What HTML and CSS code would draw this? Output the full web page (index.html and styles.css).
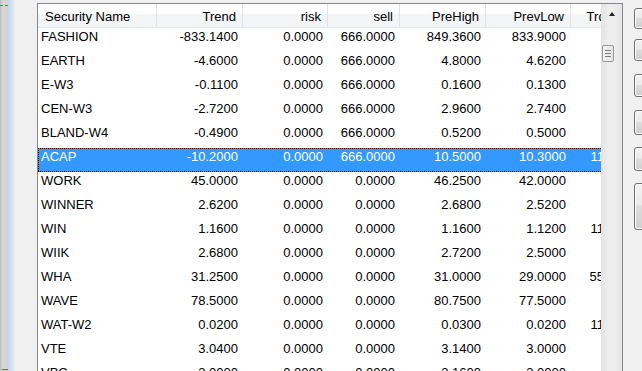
FILE: index.html
```html
<!DOCTYPE html>
<html lang="en">
<head>
    <meta charset="UTF-8">
    <title>Securities</title>
    <link rel="stylesheet" href="styles.css">
</head>
<body>
    <div class="window">
        <div class="side">
            <div class="side-edge"><span class="mark-green"></span><span class="mark-red"></span></div>
            <div class="side-bar"></div>
            <div class="side-fill"></div>
        </div>

        <div class="list">
            <div class="grid">
                <div class="head">
                    <span>Security Name</span><span>Trend</span><span>risk</span><span>sell</span><span>PreHigh</span><span>PrevLow</span><span>TrdVolume</span>
                </div>
                <div class="row"><span>FASHION</span><span>-833.1400</span><span>0.0000</span><span>666.0000</span><span>849.3600</span><span>833.9000</span><span></span></div>
                <div class="row"><span>EARTH</span><span>-4.6000</span><span>0.0000</span><span>666.0000</span><span>4.8000</span><span>4.6200</span><span></span></div>
                <div class="row"><span>E-W3</span><span>-0.1100</span><span>0.0000</span><span>666.0000</span><span>0.1600</span><span>0.1300</span><span></span></div>
                <div class="row"><span>CEN-W3</span><span>-2.7200</span><span>0.0000</span><span>666.0000</span><span>2.9600</span><span>2.7400</span><span></span></div>
                <div class="row"><span>BLAND-W4</span><span>-0.4900</span><span>0.0000</span><span>666.0000</span><span>0.5200</span><span>0.5000</span><span></span></div>
                <div class="row selected"><span>ACAP</span><span>-10.2000</span><span>0.0000</span><span>666.0000</span><span>10.5000</span><span>10.3000</span><span>1100.0000</span></div>
                <div class="row"><span>WORK</span><span>45.0000</span><span>0.0000</span><span>0.0000</span><span>46.2500</span><span>42.0000</span><span></span></div>
                <div class="row"><span>WINNER</span><span>2.6200</span><span>0.0000</span><span>0.0000</span><span>2.6800</span><span>2.5200</span><span></span></div>
                <div class="row"><span>WIN</span><span>1.1600</span><span>0.0000</span><span>0.0000</span><span>1.1600</span><span>1.1200</span><span>1100.0000</span></div>
                <div class="row"><span>WIIK</span><span>2.6800</span><span>0.0000</span><span>0.0000</span><span>2.7200</span><span>2.5000</span><span></span></div>
                <div class="row"><span>WHA</span><span>31.2500</span><span>0.0000</span><span>0.0000</span><span>31.0000</span><span>29.0000</span><span>5500.0000</span></div>
                <div class="row"><span>WAVE</span><span>78.5000</span><span>0.0000</span><span>0.0000</span><span>80.7500</span><span>77.5000</span><span></span></div>
                <div class="row"><span>WAT-W2</span><span>0.0200</span><span>0.0000</span><span>0.0000</span><span>0.0300</span><span>0.0200</span><span>1100.0000</span></div>
                <div class="row"><span>VTE</span><span>3.0400</span><span>0.0000</span><span>0.0000</span><span>3.1400</span><span>3.0000</span><span></span></div>
                <div class="row"><span>VBC</span><span>3.0000</span><span>0.0000</span><span>0.0000</span><span>3.1600</span><span>3.0000</span><span></span></div>
            </div>
            <div class="vscroll">
                <div class="sb-up"><span class="arrow"></span></div>
                <div class="sb-thumb"><i></i><i></i><i></i></div>
            </div>
        </div>

        <div class="buttons">
            <button class="b1"></button>
            <button class="b2"></button>
            <button class="b3"></button>
            <button class="b4"></button>
            <button class="b5"></button>
            <button class="b6"></button>
        </div>
    </div>
</body>
</html>
```

FILE: styles.css
```css
body {
    margin: 0;
    background: #f0f0f0;
    font-family: "Liberation Sans", Arial, sans-serif;
    font-size: 13px;
    line-height: 15px;
    color: #000;
    overflow: hidden;
}
.window {
    display: flex;
    height: 371px;
}

/* left edge of the neighbouring pane */
.side {
    display: flex;
    width: 37px;
    flex: none;
}
.side-edge {
    position: relative;
    width: 8px;
    background: linear-gradient(90deg, #b9b9b9, #d6d6d6 30%, #d2d2d2);
}
.mark-green {
    position: absolute;
    left: 0;
    top: 5px;
    width: 8px;
    border-top: 1px dashed #3c9a3c;
}
.mark-red {
    position: absolute;
    left: 2px;
    bottom: 1px;
    width: 6px;
    border-top: 1px dashed #d04040;
}
.side-bar {
    width: 6px;
    background: linear-gradient(90deg, #c4d8ee, #dce8f6);
}
.side-fill {
    flex: 1;
    background: #f0f0f0;
}

/* list view */
.list {
    display: flex;
    width: 584px;
    flex: none;
    margin-top: 3px;
    border: 1px solid #828790;
    border-bottom: none;
    background: #fff;
    overflow: hidden;
}
.grid {
    flex: 1;
    overflow: hidden;
}
.head, .row {
    display: grid;
    grid-template-columns: 119px 86px 85px 72px 86px 85px 85px;
    width: 618px;
    height: 24px;
    box-sizing: border-box;
}
.head {
    background: linear-gradient(#fff 45%, #f4f5f7 45%);
    border-bottom: 1px solid #e6e7e9;
}
.head span {
    padding: 5px 6px 0;
    text-align: right;
    border-right: 1px solid #e1e3e7;
    white-space: nowrap;
}
.head span:first-child {
    text-align: left;
    padding-left: 7px;
}
.row span {
    padding: 1px 5px 0;
    text-align: right;
    white-space: nowrap;
}
.row span:first-child {
    text-align: left;
    padding-left: 3px;
}
.row.selected {
    color: #fff;
    background:
        repeating-linear-gradient(90deg, #000 0 1px, #c60 1px 2px) top / 100% 1px no-repeat,
        repeating-linear-gradient(90deg, #000 0 1px, #c60 1px 2px) bottom / 100% 1px no-repeat,
        repeating-linear-gradient(#000 0 1px, #c60 1px 2px) left / 1px 100% no-repeat,
        #3399ff;
}

/* vertical scrollbar */
.vscroll {
    width: 21px;
    flex: none;
    background: linear-gradient(90deg, #e3e3e3, #efefef 40%, #ececec 70%, #e3e3e3);
}
.sb-up {
    height: 17px;
    display: flex;
    justify-content: center;
    padding-top: 8px;
    box-sizing: border-box;
}
.arrow {
    width: 0;
    height: 0;
    border-left: 3px solid transparent;
    border-right: 3px solid transparent;
    border-bottom: 4px solid #222;
}
.sb-thumb {
    margin: 24px 0 0 1px;
    width: 12px;
    height: 17px;
    box-sizing: border-box;
    border: 1px solid #979797;
    border-radius: 2px;
    background: linear-gradient(90deg, #f4f4f4, #e4e4e4);
    display: flex;
    flex-direction: column;
    justify-content: center;
    align-items: center;
    gap: 2px;
}
.sb-thumb i {
    width: 6px;
    height: 1px;
    background: #7a7a7a;
}

/* command buttons at the right */
.buttons {
    display: flex;
    flex-direction: column;
    padding: 8px 0 0 11px;
    overflow: hidden;
}
.buttons button {
    width: 75px;
    flex: none;
    margin: 0;
    border: 1px solid #707070;
    border-radius: 3px;
    background: linear-gradient(#f2f2f2, #ebebeb 45%, #dddddd 50%, #cfcfcf);
    box-shadow: inset 0 0 0 1px #fcfcfc;
}
.b1 { height: 21px; }
.b2 { height: 22px; margin-top: 10px !important; }
.b3 { height: 23px; margin-top: 13px !important; }
.b4 { height: 25px; margin-top: 13px !important; }
.b5 { height: 24px; margin-top: 12px !important; }
.b6 { height: 47px; margin-top: 12px !important; }
```
